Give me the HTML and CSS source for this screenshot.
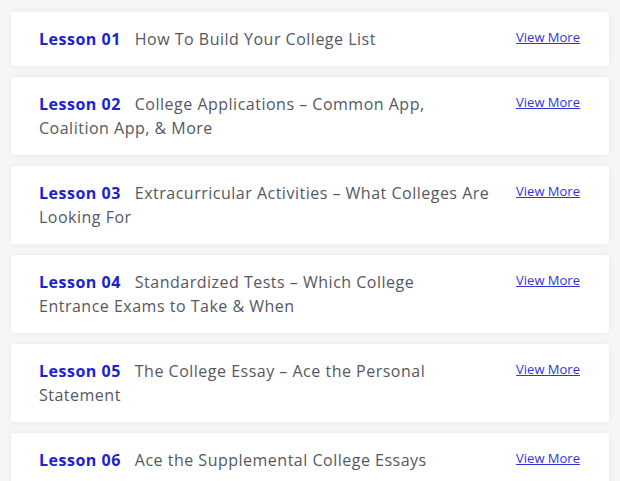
FILE: index.html
```html
<!DOCTYPE html>
<html>
<head>
<meta charset="utf-8">
<link rel="stylesheet" href="styles.css">
</head>
<body>
<div class="list">
  <div class="card">
    <p class="title"><span class="num">Lesson 01</span>How To Build Your College List</p>
    <a class="more" href="#">View More</a>
  </div>
  <div class="card">
    <p class="title"><span class="num">Lesson 02</span>College Applications – Common App, Coalition App, &amp; More</p>
    <a class="more" href="#">View More</a>
  </div>
  <div class="card">
    <p class="title"><span class="num">Lesson 03</span>Extracurricular Activities – What Colleges Are Looking For</p>
    <a class="more" href="#">View More</a>
  </div>
  <div class="card">
    <p class="title"><span class="num">Lesson 04</span>Standardized Tests – Which College<br>Entrance Exams to Take &amp; When</p>
    <a class="more" href="#">View More</a>
  </div>
  <div class="card">
    <p class="title"><span class="num">Lesson 05</span>The College Essay – Ace the Personal Statement</p>
    <a class="more" href="#">View More</a>
  </div>
  <div class="card">
    <p class="title"><span class="num">Lesson 06</span>Ace the Supplemental College Essays</p>
    <a class="more" href="#">View More</a>
  </div>
</div>
</body>
</html>
```
FILE: styles.css
```css
html, body {
  margin: 0;
  padding: 0;
  background: #f6f6f6;
}
body {
  padding: 12px 11px;
  font-family: "Open Sans", "Liberation Sans", sans-serif;
}
.list {
  display: flex;
  flex-direction: column;
  gap: 11px;
}
.card {
  background: #ffffff;
  border-radius: 3px;
  box-shadow: 0 0 6px rgba(0,0,0,0.06);
  display: flex;
  align-items: flex-start;
  justify-content: space-between;
  padding: 15px 29px 15px 28px;
}
.title {
  margin: 0;
  width: 456px;
  font-size: 16px;
  line-height: 24px;
  letter-spacing: 0.5px;
  color: #55585e;
}
.num {
  color: #1a22d2;
  font-weight: 700;
  letter-spacing: 0.5px;
  margin-right: 14px;
}
.more {
  font-size: 13px;
  line-height: 20px;
  color: #3034d6;
  text-decoration: underline;
  white-space: nowrap;
}
```
